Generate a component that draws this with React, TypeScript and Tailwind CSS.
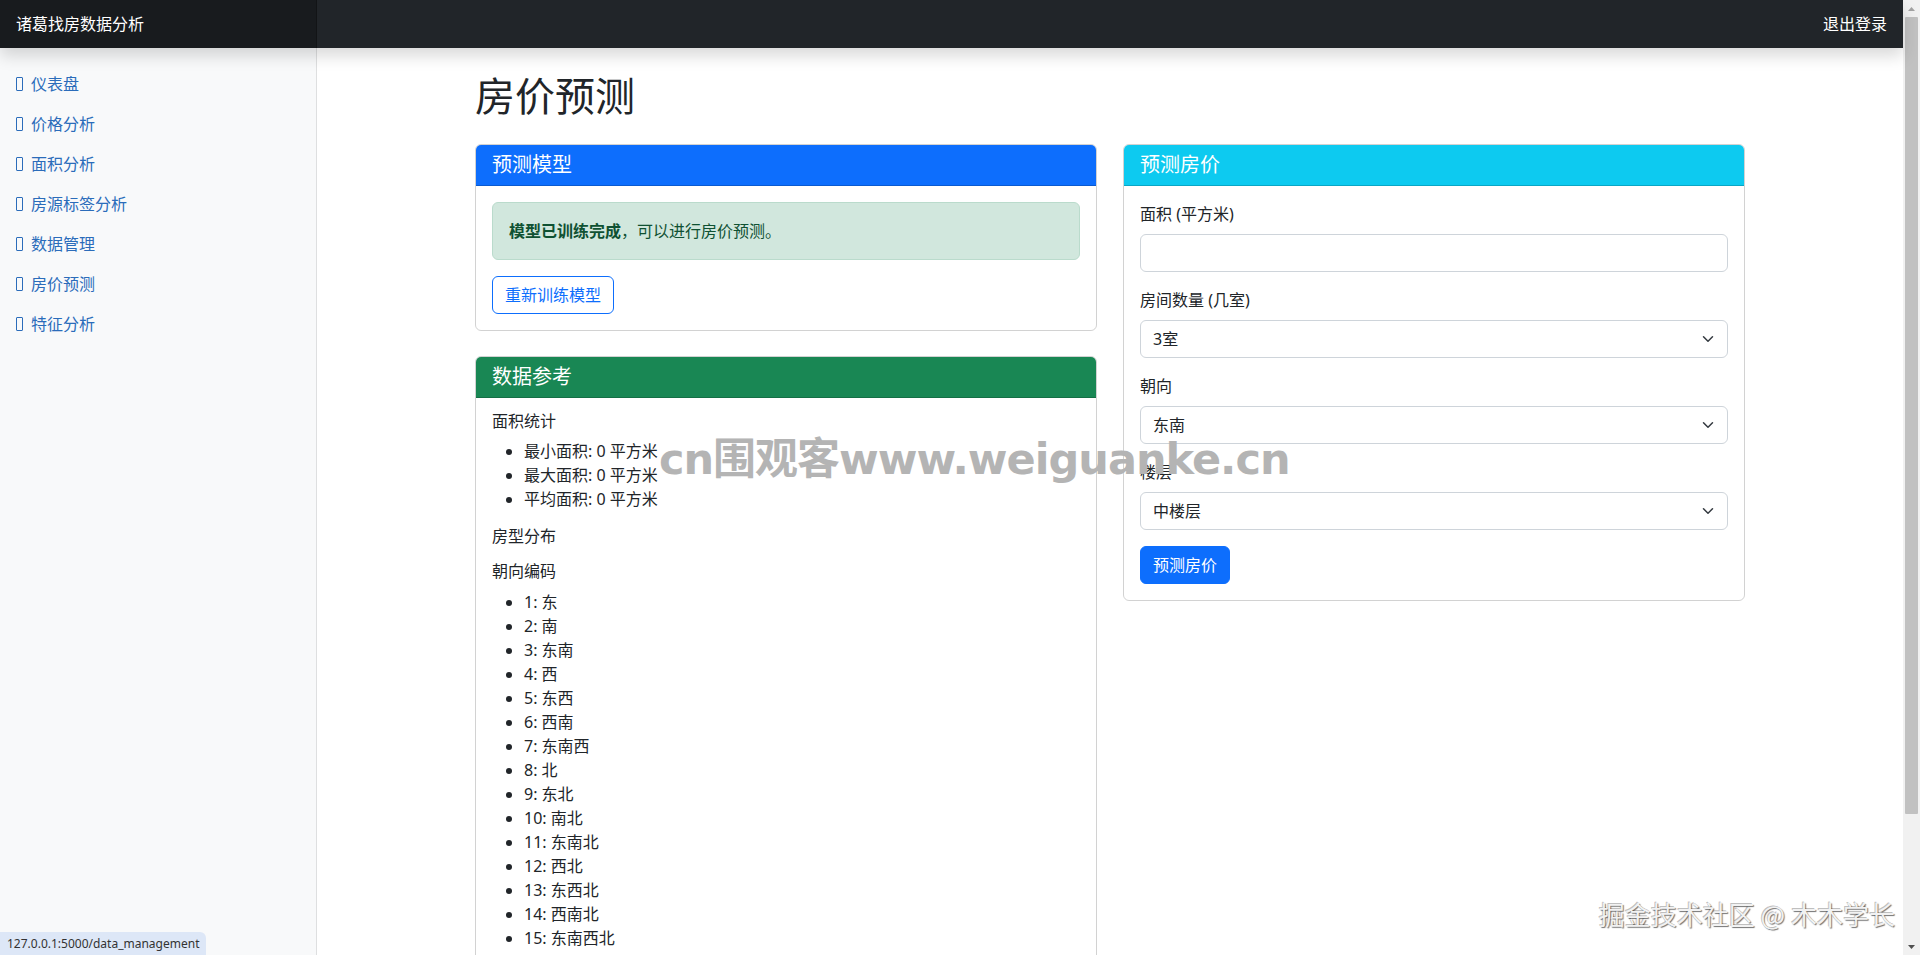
import React from 'react';

const navItems = ['仪表盘', '价格分析', '面积分析', '房源标签分析', '数据管理', '房价预测', '特征分析'];

const directions = [
  '东', '南', '东南', '西', '东西', '西南', '东南西', '北', '东北', '南北', '东南北', '西北', '东西北', '西南北', '东南西北',
];

function Chevron() {
  return (
    <svg className="pointer-events-none absolute right-3 top-1/2 -translate-y-1/2" width="16" height="12" viewBox="0 0 16 16" fill="none">
      <path d="m2 5 6 6 6-6" stroke="#343a40" strokeWidth="2" strokeLinecap="round" strokeLinejoin="round" />
    </svg>
  );
}

function SelectField({ label, value, options }: { label: string; value: string; options: string[] }) {
  return (
    <div className="mb-4">
      <label className="mb-2 block leading-6">{label}</label>
      <div className="relative">
        <select
          defaultValue={value}
          className="block h-[38px] w-full appearance-none rounded-md border border-[#ced4da] bg-white px-3 pr-9 leading-6 text-[#212529] outline-none"
        >
          {options.map((o) => (
            <option key={o}>{o}</option>
          ))}
        </select>
        <Chevron />
      </div>
    </div>
  );
}

export default function App() {
  return (
    <div className="flex h-screen w-full overflow-hidden bg-white font-['Noto_Sans','Noto_Sans_CJK_SC',sans-serif] text-base text-[#212529]">
      <div className="relative flex min-w-0 flex-1 flex-col">
        {/* top navbar */}
        <header className="relative z-10 flex h-12 shrink-0 items-center bg-[#212529] text-white shadow-[0_8px_16px_rgba(0,0,0,0.15)]">
          <div className="flex h-full w-[317px] items-center bg-black/25 px-4 shadow-[inset_-1px_0_0_rgba(0,0,0,0.25)]">
            诸葛找房数据分析
          </div>
          <div className="flex-1" />
          <a className="px-4 leading-6 text-white">退出登录</a>
        </header>

        <div className="flex min-h-0 flex-1">
          {/* sidebar */}
          <nav className="w-[317px] shrink-0 bg-[#f8f9fa] pt-4 shadow-[inset_-1px_0_0_rgba(0,0,0,0.1)]">
            <ul className="flex flex-col">
              {navItems.map((item) => (
                <li key={item}>
                  <a className="flex items-center px-4 py-2 leading-6 text-[#2b6cba]">
                    <span className="mr-[8px] inline-block h-[14px] w-[7px] rounded-[1px] border-[1.5px] border-current" />
                    {item}
                  </a>
                </li>
              ))}
            </ul>
          </nav>

          {/* main */}
          <main className="min-w-0 flex-1 overflow-hidden px-6">
            <div className="mx-auto w-[1270px] pt-6">
              <h1 className="mb-6 text-[40px] font-normal leading-[1.2]">房价预测</h1>

              <div className="grid grid-cols-2 gap-[26px]">
                <div className="flex flex-col">
                  {/* model card */}
                  <div className="rounded-md border border-black/[0.175]">
                    <div className="rounded-t-[5px] border-b border-black/[0.175] bg-[#0d6efd] px-4 py-2 text-[20px] leading-6 text-white">
                      预测模型
                    </div>
                    <div className="p-4">
                      <div className="mb-4 rounded-md border border-[#badbcc] bg-[#d1e7dd] p-4 leading-6 text-[#0f5132]">
                        <strong className="font-bold">模型已训练完成</strong>，可以进行房价预测。
                      </div>
                      <button className="h-[38px] rounded-md border border-[#0d6efd] bg-white px-3 leading-6 text-[#0d6efd]">
                        重新训练模型
                      </button>
                    </div>
                  </div>

                  {/* reference data card */}
                  <div className="mt-[25px] rounded-md border border-black/[0.175]">
                    <div className="rounded-t-[5px] border-b border-black/[0.175] bg-[#198754] px-4 py-2 text-[20px] leading-6 text-white">
                      数据参考
                    </div>
                    <div className="px-4 pb-4 pt-[14px]">
                      <h6 className="mb-2 leading-[1.2]">面积统计</h6>
                      <ul className="mb-4 list-disc pl-8 leading-6">
                        <li>最小面积: 0 平方米</li>
                        <li>最大面积: 0 平方米</li>
                        <li>平均面积: 0 平方米</li>
                      </ul>
                      <h6 className="mb-4 leading-[1.2]">房型分布</h6>
                      <h6 className="mb-2 leading-[1.2]">朝向编码</h6>
                      <ul className="list-disc pl-8 leading-6">
                        {directions.map((d, i) => (
                          <li key={d}>
                            {i + 1}: {d}
                          </li>
                        ))}
                      </ul>
                    </div>
                  </div>
                </div>

                {/* predict card */}
                <div className="self-start rounded-md border border-black/[0.175]">
                  <div className="rounded-t-[5px] border-b border-black/[0.175] bg-[#0dcaf0] px-4 py-2 text-[20px] leading-6 text-white">
                    预测房价
                  </div>
                  <div className="p-4">
                    <div className="mb-4">
                      <label className="mb-2 block leading-6">面积 (平方米)</label>
                      <input className="block h-[38px] w-full rounded-md border border-[#ced4da] bg-white px-3 leading-6 outline-none" />
                    </div>
                    <SelectField label="房间数量 (几室)" value="3室" options={['1室', '2室', '3室', '4室', '5室']} />
                    <SelectField label="朝向" value="东南" options={directions} />
                    <SelectField label="楼层" value="中楼层" options={['低楼层', '中楼层', '高楼层']} />
                    <button className="h-[38px] rounded-md border border-[#0d6efd] bg-[#0d6efd] px-3 leading-6 text-white">
                      预测房价
                    </button>
                  </div>
                </div>
              </div>
            </div>
          </main>
        </div>

        {/* watermarks and browser status bubble */}
        <div className="pointer-events-none absolute left-[659px] top-[438px] whitespace-nowrap font-['DejaVu_Sans','Noto_Sans_CJK_SC',sans-serif] text-[43px] font-bold leading-none tracking-[-1px] text-[#b4b4b4]">
          cn围观客www.weiguanke.cn
        </div>
        <div className="pointer-events-none absolute right-[8px] top-[898px] whitespace-nowrap font-['Noto_Sans_CJK_SC',sans-serif] text-[26px] leading-8 text-[#f2f2f2] [text-shadow:1px_1px_1px_rgba(0,0,0,0.55),-1px_-1px_0_rgba(0,0,0,0.25)]">
          掘金技术社区 @ 木木学长
        </div>
        <div className="absolute bottom-0 left-0 flex h-[23px] items-center rounded-tr-md bg-[#dde7f7] px-[7px] font-['Noto_Sans',sans-serif] text-[12px] text-[#333]">
          127.0.0.1:5000/data_management
        </div>
      </div>

      {/* page scrollbar */}
      <div className="flex w-[17px] shrink-0 flex-col bg-[#f1f1f1]">
        <div className="flex h-[17px] items-center justify-center">
          <svg width="7" height="4" viewBox="0 0 7 4"><path d="M0 4 3.5 0 7 4z" fill="#a3a3a3" /></svg>
        </div>
        <div className="mx-[2px] h-[797px] rounded-[1px] bg-[#c1c1c1]" />
        <div className="flex-1" />
        <div className="flex h-[17px] items-center justify-center">
          <svg width="7" height="4" viewBox="0 0 7 4"><path d="M0 0 3.5 4 7 0z" fill="#505050" /></svg>
        </div>
      </div>
    </div>
  );
}
